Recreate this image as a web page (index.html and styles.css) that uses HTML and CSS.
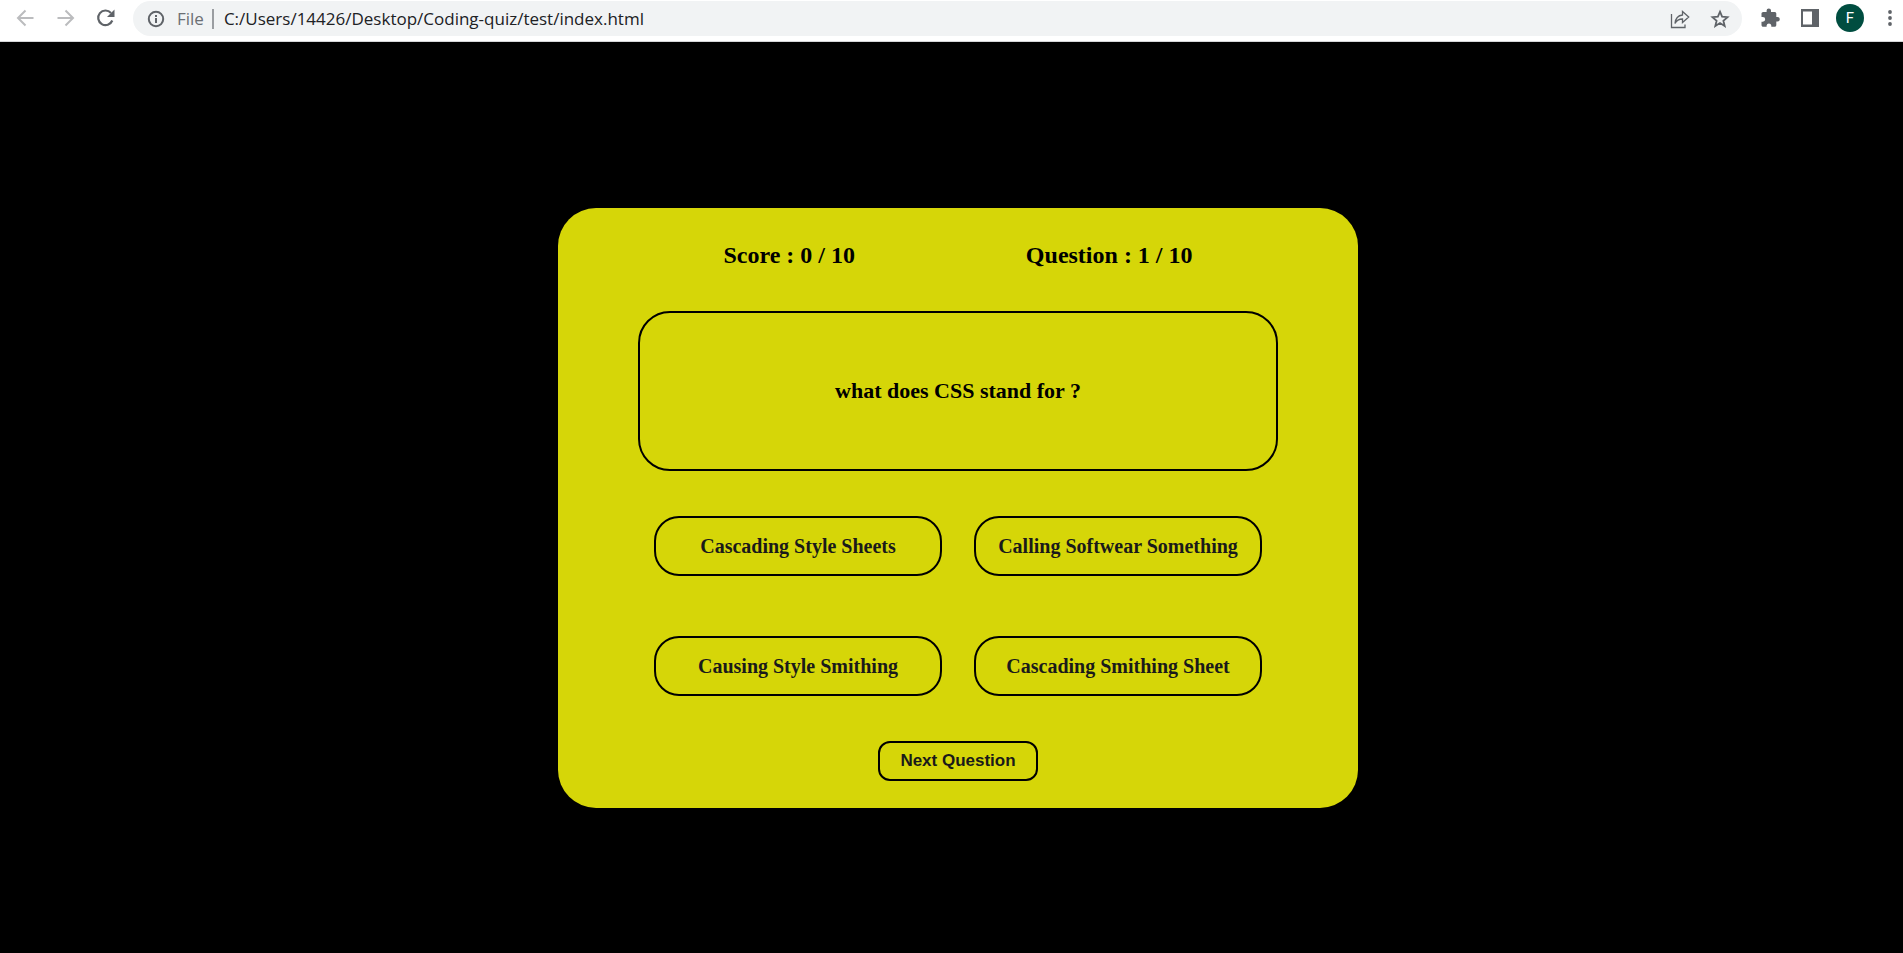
FILE: index.html
```html
<!DOCTYPE html>
<html lang="en">
<head>
<meta charset="utf-8">
<title>Coding Quiz</title>
<link rel="stylesheet" href="styles.css">
</head>
<body>
<header class="toolbar">
  <nav class="nav">
    <button class="icon-btn muted" type="button" aria-label="Back"><svg viewBox="0 0 20 20"><path d="M18.500 10H3.500M10.500 2.500L3 10l7.500 7.500"/></svg></button>
    <button class="icon-btn muted" type="button" aria-label="Forward"><svg viewBox="0 0 20 20"><path d="M2.500 10h15M10.500 2.500L18 10l-7.500 7.500"/></svg></button>
    <button class="icon-btn" type="button" aria-label="Reload"><svg viewBox="0 0 20 20"><path d="M17.300 12.500A7.300 7.300 0 1 1 16 5" stroke-width="2.200"/><path class="solid" d="M19.500 1.500V9H12z"/></svg></button>
  </nav>
  <div class="address">
    <svg class="info-icon" viewBox="0 0 18 18"><circle cx="9" cy="9" r="7.200"/><path d="M9 8v5M9 5v2"/></svg>
    <label class="scheme" for="url">File</label>
    <input class="url" id="url" type="text" value="C:/Users/14426/Desktop/Coding-quiz/test/index.html">
    <button class="icon-btn thin" type="button" aria-label="Share"><svg viewBox="0 0 20 20"><path d="M1.500 5v13.500H15V15.500M5 14.500C5.500 9 8 6.500 12.500 6V2.500L18.700 8l-6.200 5.500V10C9 10 6.500 11.500 5 14.500z"/></svg></button>
    <button class="icon-btn" type="button" aria-label="Bookmark"><svg viewBox="0 0 20 20"><path stroke-width="1.800" d="M10 2.700l2.100 5 5.400.5-4.100 3.500 1.300 5.300-4.700-2.900-4.700 2.900 1.300-5.300-4.100-3.500 5.400-.5z"/></svg></button>
  </div>
  <div class="actions">
    <button class="icon-btn" type="button" aria-label="Extensions"><svg viewBox="0 0 20 20"><path class="solid" d="M17.600 9.100h-1.300V5.600c0-1-.8-1.700-1.800-1.700H11V2.600a2.200 2.200 0 0 0-4.400 0v1.300H3.200c-1 0-1.700.8-1.700 1.700v3.300h1.300a2.400 2.400 0 0 1 0 4.800H1.500V17c0 1 .8 1.800 1.700 1.800h3.400v-1.300a2.400 2.400 0 0 1 4.700 0v1.300h3.300c1 0 1.700-.8 1.700-1.800v-3.500h1.300a2.200 2.200 0 0 0 0-4.400z"/></svg></button>
    <button class="icon-btn" type="button" aria-label="Side panel"><svg viewBox="0 0 20 20"><path class="solid" fill-rule="evenodd" d="M1 1h18v18H1zM3 3.500v13h9v-13z"/></svg></button>
    <button class="avatar" type="button">F</button>
    <button class="icon-btn" type="button" aria-label="Menu"><svg viewBox="0 0 20 20"><circle class="solid" cx="10" cy="4" r="1.900"/><circle class="solid" cx="10" cy="10" r="1.900"/><circle class="solid" cx="10" cy="16" r="1.900"/></svg></button>
  </div>
</header>
<main class="page">
  <section class="card">
    <div class="stats">
      <span>Score : 0 / 10</span>
      <span>Question : 1 / 10</span>
    </div>
    <h1 class="question">what does CSS stand for ?</h1>
    <div class="options">
      <button class="option" type="button">Cascading Style Sheets</button>
      <button class="option" type="button">Calling Softwear Something</button>
      <button class="option" type="button">Causing Style Smithing</button>
      <button class="option" type="button">Cascading Smithing Sheet</button>
    </div>
    <button class="next" type="button">Next Question</button>
  </section>
</main>
</body>
</html>
```

FILE: styles.css
```css
* { box-sizing: border-box; }

body {
  margin: 0;
  min-height: 100vh;
  display: flex;
  flex-direction: column;
  background: #000;
}

button {
  padding: 0;
  border: 0;
  background: none;
  cursor: pointer;
}

.toolbar {
  display: flex;
  align-items: flex-start;
  gap: 18px;
  height: 42px;
  padding: 1px 3px 0 15px;
  background: #fff;
  border-bottom: 1px solid #d5d6d8;
  font-family: "Open Sans", "Noto Sans", sans-serif;
}

.nav, .actions {
  display: flex;
  align-items: center;
  height: 34px;
}

.nav { gap: 20px; }
.actions { gap: 20px; }
.actions .avatar { margin: 0 -4px; }

.icon-btn {
  flex: none;
  width: 20px;
  height: 20px;
  color: #5f6368;
}

.icon-btn.muted { color: #bbbcbe; }

svg {
  display: block;
  width: 100%;
  height: 100%;
  fill: none;
  stroke: currentColor;
  stroke-width: 2;
}

.thin svg { stroke-width: 1.3; }
.solid { fill: currentColor; stroke: none; }

.address {
  flex: 1;
  display: flex;
  align-items: center;
  gap: 20px;
  height: 35px;
  padding: 0 12px 0 14px;
  border-radius: 18px;
  background: #f1f3f4;
}

.info-icon {
  flex: none;
  width: 18px;
  height: 18px;
  margin-right: -8px;
  color: #5f6368;
}

.scheme {
  padding-right: 8px;
  border-right: 2px solid #9a9da1;
  color: #6b6f74;
  font-size: 17px;
  line-height: 20px;
}

.url {
  flex: 1;
  min-width: 0;
  margin-left: -10px;
  padding: 0;
  border: 0;
  outline: 0;
  background: none;
  color: #202124;
  font-family: inherit;
  font-size: 17px;
}

.avatar {
  width: 28px;
  height: 28px;
  border-radius: 50%;
  background: #004d40;
  color: #fff;
  font-family: Roboto, sans-serif;
  font-size: 15px;
}

.page {
  flex: 1;
  display: flex;
  justify-content: center;
  align-items: center;
  padding: 21px 0 0 13px;
}

.card {
  width: 800px;
  max-width: 100%;
  display: flex;
  flex-direction: column;
  align-items: center;
  padding: 33px 80px 27px;
  border-radius: 38px;
  background: #d6d608;
  color: #000;
  font-family: "Liberation Serif", serif;
  font-weight: bold;
}

.stats {
  width: 100%;
  display: flex;
  justify-content: space-around;
  font-size: 24px;
  line-height: 28px;
}

.question {
  width: 100%;
  display: flex;
  align-items: center;
  justify-content: center;
  min-height: 160px;
  margin: 42px 0 45px;
  border: 2px solid #000;
  border-radius: 32px;
  font-size: 22px;
}

.options {
  width: 100%;
  display: grid;
  grid-template-columns: 1fr 1fr;
  gap: 60px 32px;
  padding: 0 16px;
}

.option {
  min-height: 60px;
  border: 2px solid #000;
  border-radius: 25px;
  color: #1a1a1a;
  font: bold 20px "Liberation Serif", serif;
}

.next {
  width: 160px;
  height: 40px;
  margin-top: 45px;
  border: 2px solid #000;
  border-radius: 12px;
  color: #1a1a1a;
  font: bold 17px "Liberation Sans", sans-serif;
}
```
